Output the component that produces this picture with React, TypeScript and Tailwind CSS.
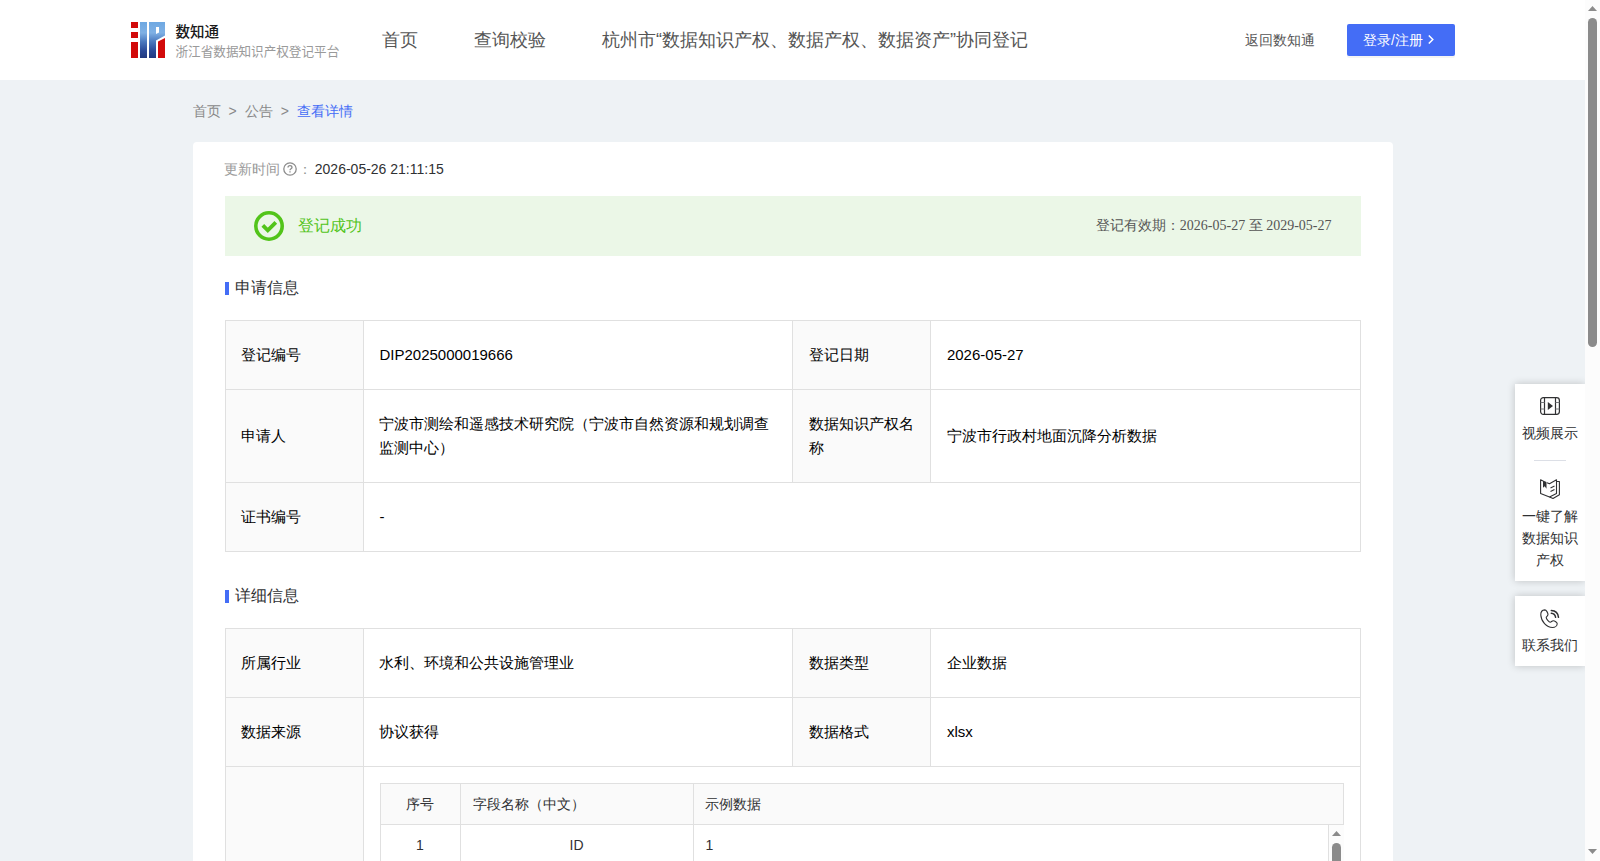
import React from "react";

const NAV = ["首页", "查询校验", "杭州市“数据知识产权、数据产权、数据资产”协同登记"];

function Logo() {
  return (
    <svg className="w-[34px] h-9" viewBox="0 0 34 36">
      <defs>
        <linearGradient id="blue" gradientUnits="userSpaceOnUse" x1="0" y1="0" x2="0" y2="36">
          <stop offset="0" stopColor="#6ea8e2" />
          <stop offset="0.3" stopColor="#7fb0e4" />
          <stop offset="0.55" stopColor="#4a78be" />
          <stop offset="0.8" stopColor="#2b4a98" />
          <stop offset="1" stopColor="#22397f" />
        </linearGradient>
      </defs>
      <path fill="#d20a0a" d="M0 0h7v6H0zM0 10h7v6H0zM0 20h7v16H0zM27 19.500l7-3.500v20h-7z" />
      <path fill="url(#blue)" d="M9 0h7v36H9z" />
      <path
        fill="url(#blue)"
        fillRule="evenodd"
        d="M18 0h16v13.500l-9 5v17.500h-7zM25 5v7l3-1.500V5z"
      />
    </svg>
  );
}

function Header() {
  return (
    <header className="flex items-center h-20 bg-white pl-[131px] pr-[130px]">
      <Logo />
      <div className="ml-[10.500px] w-[206.500px] font-['Noto_Sans_CJK_JP',sans-serif]">
        <div className="text-[14.500px] leading-5 font-medium text-[#1a1a1a]">数知通</div>
        <div className="text-[12.600px] leading-[19px] text-[#9a9a9a]">浙江省数据知识产权登记平台</div>
      </div>
      <nav className="flex gap-14 text-lg text-[#555]">
        {NAV.map((item) => (
          <a key={item} className="whitespace-nowrap">
            {item}
          </a>
        ))}
      </nav>
      <a className="ml-auto text-sm text-[#555]">返回数知通</a>
      <button className="ml-8 flex items-center w-[108px] h-8 pl-4 rounded-xs bg-[#446df6] text-sm text-white shadow-[0_2px_0_rgba(0,0,0,0.045)]">
        登录/注册
        <svg className="ml-[5px] -mt-0.5 w-[6px] h-[9px]" viewBox="0 0 6 9" fill="none" stroke="currentColor" strokeWidth="1.5">
          <path d="M.8.5l4 4-4 4" />
        </svg>
      </button>
    </header>
  );
}

function SectionTitle({ children }: { children: React.ReactNode }) {
  return (
    <h2 className="flex items-center h-6 text-base text-[#303133]">
      <span className="w-1 h-[13px] mt-px mr-[6.200px] bg-[#446df6]" />
      {children}
    </h2>
  );
}

type CellProps = {
  colSpan?: number;
  children?: React.ReactNode;
};

function Label({ children }: CellProps) {
  return <td className="border border-[#e0e0e0] bg-[#fafafa] px-[15.950px] py-[22px]">{children}</td>;
}

function Value({ colSpan, children }: CellProps) {
  return (
    <td colSpan={colSpan} className="border border-[#e0e0e0] px-[15.950px] py-[22px]">
      {children}
    </td>
  );
}

function InfoTable({ children }: { children: React.ReactNode }) {
  return (
    <table className="w-[1136px] table-fixed border-collapse text-[15px] leading-6 text-black">
      <colgroup>
        <col className="w-[138px]" />
        <col className="w-[429.500px]" />
        <col className="w-[138px]" />
        <col className="w-[429.500px]" />
      </colgroup>
      <tbody>{children}</tbody>
    </table>
  );
}

function FieldTable() {
  return (
    <div className="w-[964px] text-sm text-[#303133]">
      <div className="flex h-[42px] items-stretch border border-[#e0e0e0] bg-[#fafafa]">
        <div className="flex w-[80px] items-center justify-center border-r border-[#e0e0e0]">序号</div>
        <div className="flex w-[233px] items-center border-r border-[#e0e0e0] pl-3">字段名称（中文）</div>
        <div className="flex items-center pl-[11.600px]">示例数据</div>
      </div>
      <div className="flex h-[240px] border-l border-[#e0e0e0]">
        <div className="flex h-10 w-full">
          <div className="flex h-10 w-[80px] items-center justify-center border-r border-[#e0e0e0]">1</div>
          <div className="flex h-10 w-[233px] items-center justify-center border-r border-[#e0e0e0]">ID</div>
          <div className="flex h-10 items-center pl-3">1</div>
        </div>
        <div className="flex w-4 shrink-0 flex-col items-center border-l border-[#e0e0e0] bg-[#fcfcfc] pt-1.5">
          <svg className="w-[9px] h-[5px]" viewBox="0 0 9 5">
            <path fill="#8b8b8b" d="M4.500 0L9 5H0z" />
          </svg>
          <div className="mt-[7px] h-24 w-[9px] rounded-full bg-[#8b8b8b]" />
        </div>
      </div>
    </div>
  );
}

function VideoIcon() {
  return (
    <svg className="w-5 h-[18px]" viewBox="0 0 20 18" fill="none" stroke="#303133" strokeWidth="1.2">
      <rect x=".6" y=".6" width="18.800" height="16.800" rx="2.800" />
      <path d="M4.500 .6v16.800M15.500 .6v16.800" />
      <path d="M.6 5.500h3.900M.6 12h3.900M15.500 5.500h3.900M15.500 12h3.900" stroke="#77787c" />
      <path d="M7.800 5v8L13 9z" fill="#303133" stroke="none" />
    </svg>
  );
}

function BookIcon() {
  return (
    <svg className="w-5 h-5" viewBox="0 0 20 20" fill="none" stroke="#303133" strokeWidth="1.1" strokeLinejoin="round">
      <path d="M7 3.800l2.500 1L16.500.8v13.700l-7 3.500L.6 14.500V.8L3 1.900" />
      <path d="M16.500 2.500h2.900v13.200L13 19.400l-3.500-1.400M10.500 9l4-2M10.500 12.500l4-2" />
      <path d="M3 1.500v7.300l1.700-1.500L6.500 9.800V3z" fill="#303133" stroke="none" />
    </svg>
  );
}

function PhoneIcon() {
  return (
    <svg className="w-5 h-5" viewBox="0 0 20 20" fill="none" stroke="#303133" strokeWidth="1.1" strokeLinecap="round" strokeLinejoin="round">
      <path d="M4.800.9C2.500 1 .7 3 .8 6c.4 6.600 5.600 12.200 11.800 12.500 2.400 0 4.500-1.800 4.600-3.800 0-1.300-2.600-3-3.900-3-1.400 0-2 1.500-3.100 1.500C9 13.200 6.200 10 6.200 8.600c0-1.100 1.800-1.500 1.800-3C8 4 6.300.9 4.800.9z" />
      <path d="M11.300 1.500c4 .2 6.800 3 7.200 6.800M11.300 4.300c2.400.2 3.900 1.600 4.300 4" strokeWidth="1.500" />
    </svg>
  );
}

function SideBar() {
  return (
    <aside className="absolute left-[1515px] top-[384px] flex w-[70px] flex-col gap-[15px] text-center text-sm leading-[22px] text-[#303133] [clip-path:inset(-12px_0_-12px_-12px)]">
      <div className="flex h-[197px] flex-col items-center bg-white pt-[13px] shadow-[0_0_8px_rgba(0,0,0,0.2)]">
        <VideoIcon />
        <div className="mt-[7px]">视频展示</div>
        <div className="mt-4 h-px w-8 bg-[#dcdfe6]" />
        <div className="mt-[18px]">
          <BookIcon />
        </div>
        <div className="mt-1.5 w-14">一键了解数据知识产权</div>
      </div>
      <div className="flex h-[70px] flex-col items-center bg-white pt-[13px] shadow-[0_0_8px_rgba(0,0,0,0.2)]">
        <PhoneIcon />
        <div className="mt-[5px]">联系我们</div>
      </div>
    </aside>
  );
}

function PageScroll() {
  return (
    <div className="flex w-[15px] flex-col items-center bg-[#fcfcfc] pt-1.5 pb-[7px]">
      <svg className="w-[9px] h-[5px]" viewBox="0 0 9 5">
        <path fill="#8b8b8b" d="M4.500 0L9 5H0z" />
      </svg>
      <div className="mt-[7px] h-[329px] w-[9px] rounded-full bg-[#8b8b8b]" />
      <svg className="mt-auto w-[9px] h-[5px]" viewBox="0 0 9 5">
        <path fill="#8b8b8b" d="M0 0h9L4.500 5z" />
      </svg>
    </div>
  );
}

export default function App() {
  return (
    <div className="relative flex h-[861px] w-[1600px] overflow-hidden bg-[#eef2f5] font-['Liberation_Sans',sans-serif]">
      <div className="w-[1585px]">
        <Header />
        <main className="mx-auto w-[1200px]">
          <div className="flex h-[62px] items-center gap-2 text-sm text-[#888]">
            <span>首页</span>
            <span>&gt;</span>
            <span>公告</span>
            <span>&gt;</span>
            <span className="text-[#446df6]">查看详情</span>
          </div>
          <div className="h-[1200px] rounded bg-white px-8 pt-4">
            <div className="-ml-[0.2px] flex h-[22px] items-center text-sm text-[#999]">
              更新时间
              <svg className="ml-[2.700px] w-[14px] h-[14px]" viewBox="0 0 14 14" fill="none" stroke="#8c8c8c" strokeWidth="1.3">
                <circle cx="7" cy="7" r="6.200" />
                <path d="M5 5.600c0-1.200.9-1.900 2-1.900s2 .7 2 1.800c0 1.300-2 1.300-2 2.700M7 9.200v1.300" />
              </svg>
              <span className="ml-px">：</span>
              <span className="ml-[2.800px] text-[#303133]">2026-05-26 21:11:15</span>
            </div>
            <div className="mt-4 flex h-[60px] items-center bg-[#ebf7e7] pl-[29px] pr-[29px]">
              <svg className="w-[30px] h-[30px]" viewBox="0 0 30 30" fill="none" stroke="#52c41a">
                <circle cx="15" cy="15" r="13.200" strokeWidth="3.600" />
                <path d="M8.800 14.300l5 5 8-8" strokeWidth="3.800" />
              </svg>
              <span className="ml-[14.900px] text-base text-[#52c41a]">登记成功</span>
              <span className="ml-auto font-['Liberation_Serif',serif] text-sm text-[#555]">
                登记有效期：2026-05-27 至 2029-05-27
              </span>
            </div>
            <div className="pt-5 pb-5">
              <SectionTitle>申请信息</SectionTitle>
            </div>
            <InfoTable>
              <tr>
                <Label>登记编号</Label>
                <Value>DIP2025000019666</Value>
                <Label>登记日期</Label>
                <Value>2026-05-27</Value>
              </tr>
              <tr>
                <Label>申请人</Label>
                <Value>宁波市测绘和遥感技术研究院（宁波市自然资源和规划调查监测中心）</Value>
                <Label>数据知识产权名称</Label>
                <Value>宁波市行政村地面沉降分析数据</Value>
              </tr>
              <tr>
                <Label>证书编号</Label>
                <Value colSpan={3}>-</Value>
              </tr>
            </InfoTable>
            <div className="pt-8 pb-5">
              <SectionTitle>详细信息</SectionTitle>
            </div>
            <InfoTable>
              <tr>
                <Label>所属行业</Label>
                <Value>水利、环境和公共设施管理业</Value>
                <Label>数据类型</Label>
                <Value>企业数据</Value>
              </tr>
              <tr>
                <Label>数据来源</Label>
                <Value>协议获得</Value>
                <Label>数据格式</Label>
                <Value>xlsx</Value>
              </tr>
              <tr>
                <Label />
                <td colSpan={3} className="border border-[#e0e0e0] p-4">
                  <FieldTable />
                </td>
              </tr>
            </InfoTable>
          </div>
        </main>
      </div>
      <PageScroll />
      <SideBar />
    </div>
  );
}
